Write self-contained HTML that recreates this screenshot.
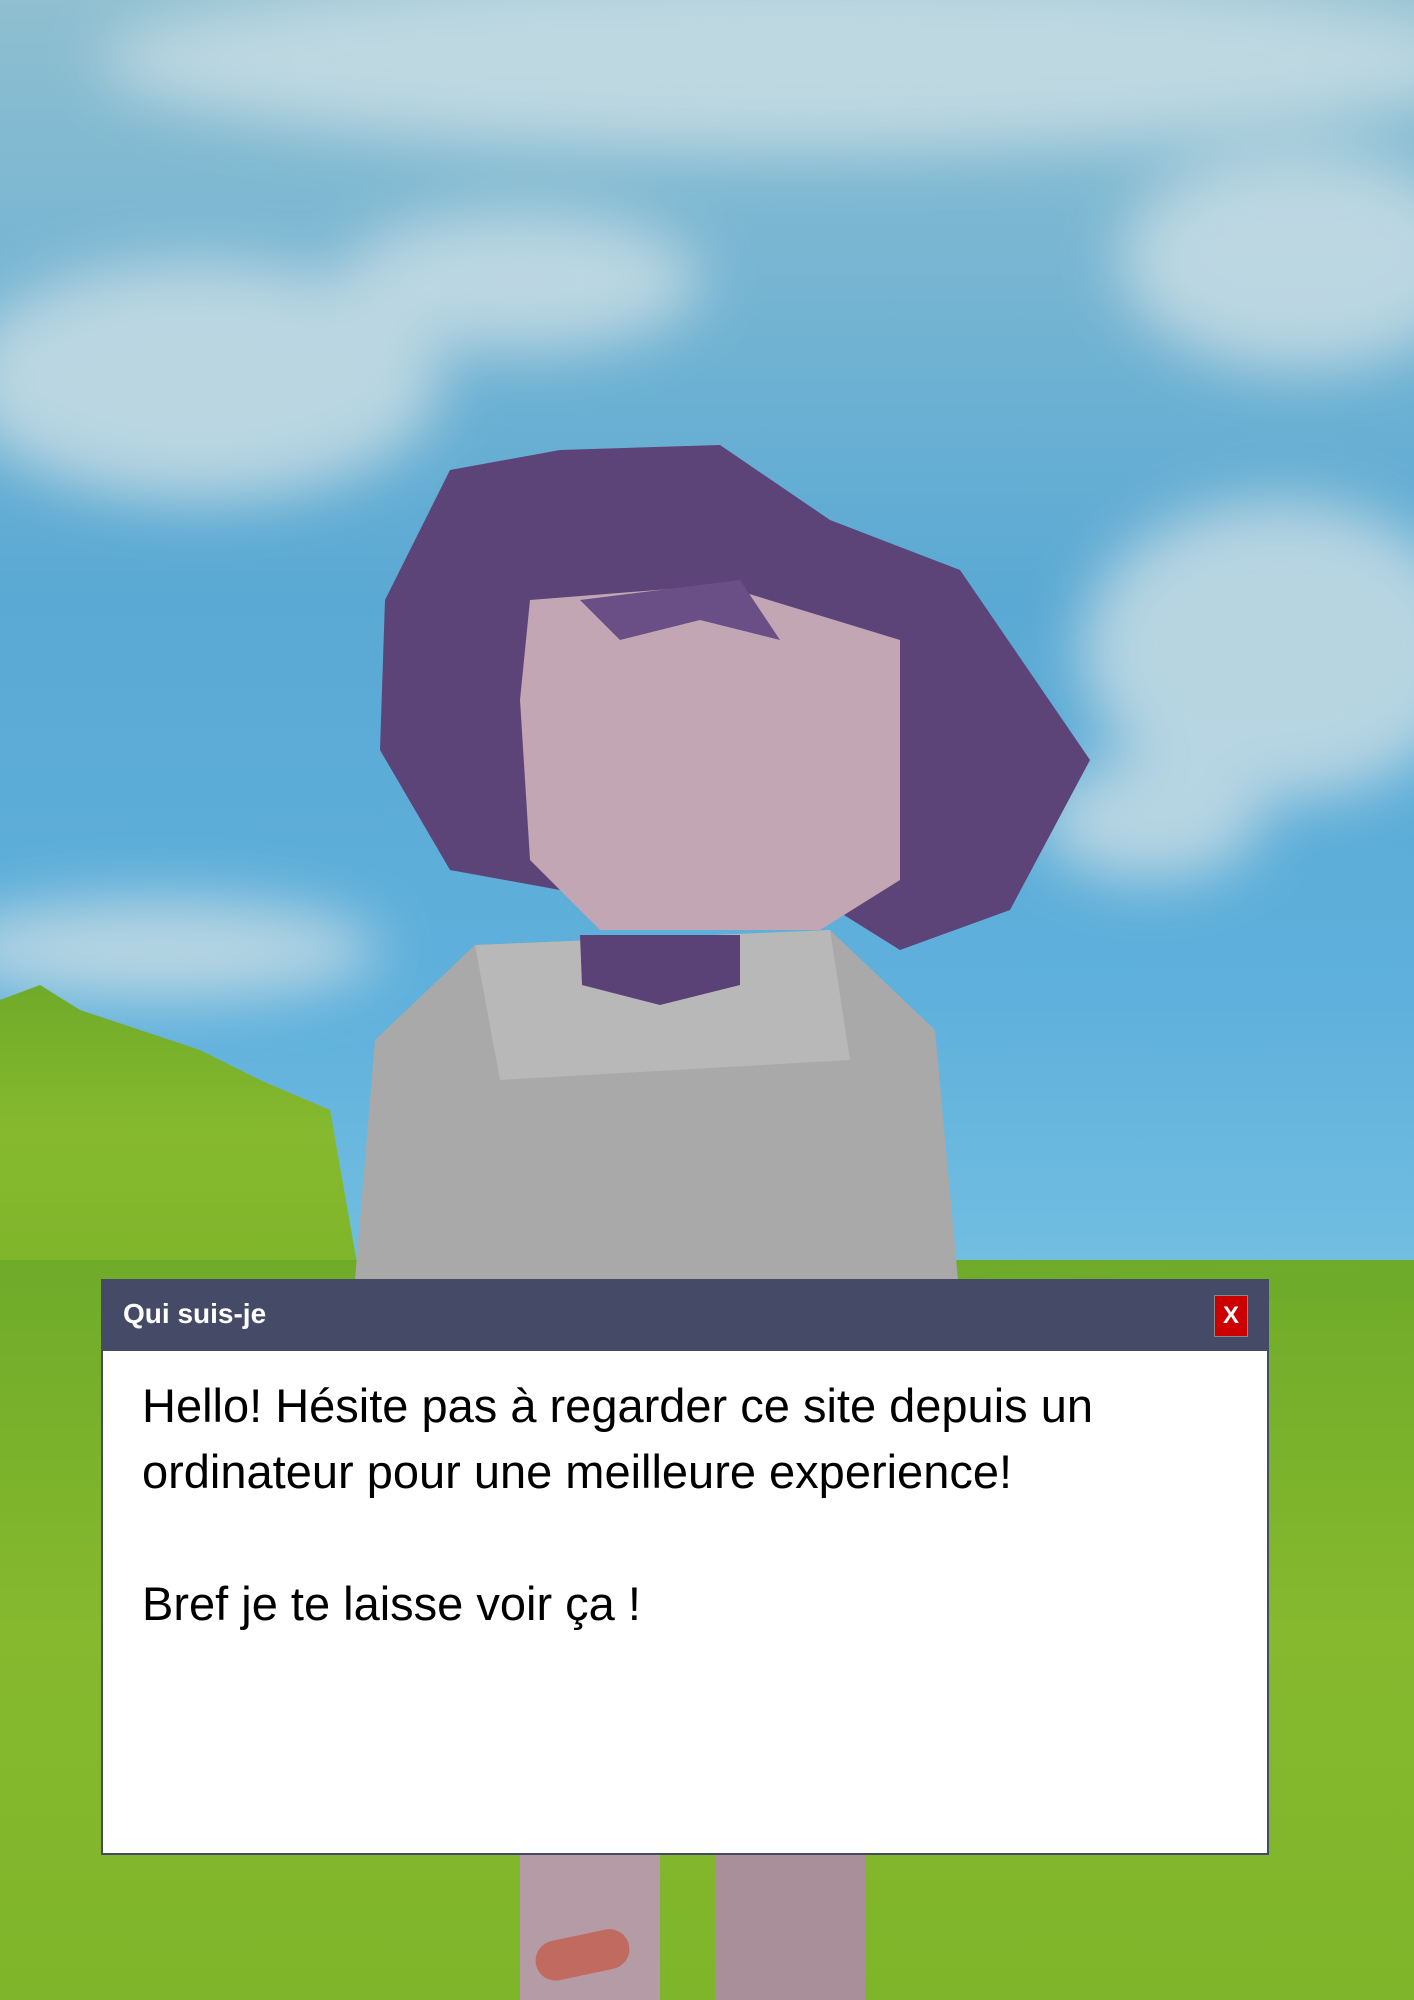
<!DOCTYPE html>
<html><head><meta charset="utf-8"><style>
html,body{margin:0;padding:0}
body{width:1414px;height:2000px;position:relative;overflow:hidden;font-family:"Liberation Sans",sans-serif;
background:linear-gradient(180deg,#8fbfd0 0%,#5aa9d4 30%,#5fb0dc 50%,#74c0e2 65%);}
.abs{position:absolute}
</style></head><body>
<svg class="abs" style="left:0;top:0" width="1414" height="2000" viewBox="0 0 1414 2000">
<defs>
<filter id="b"><feGaussianBlur stdDeviation="30"/></filter>
<linearGradient id="g" x1="0" y1="0" x2="0" y2="1"><stop offset="0" stop-color="#6fab2a"/><stop offset="0.5" stop-color="#86b92e"/><stop offset="1" stop-color="#7fb52a"/></linearGradient>
</defs>
<g filter="url(#b)" fill="#c8dde4" opacity="0.85">
<ellipse cx="800" cy="60" rx="700" ry="90"/>
<ellipse cx="200" cy="380" rx="240" ry="120"/>
<ellipse cx="520" cy="280" rx="180" ry="70"/>
<ellipse cx="1300" cy="260" rx="180" ry="110"/>
<ellipse cx="1280" cy="650" rx="200" ry="150"/>
<ellipse cx="1150" cy="820" rx="110" ry="60"/>
<ellipse cx="160" cy="950" rx="220" ry="50"/>
</g>
<path d="M0 1000 L40 985 L80 1010 L140 1030 L200 1050 L260 1080 L330 1110 L360 1280 L0 1280 Z" fill="url(#g)"/>
<rect x="0" y="1260" width="1414" height="740" fill="url(#g)"/>
<path d="M950 1280 L1000 1270 L1100 1275 L1180 1265 L1280 1268 L1414 1265 L1414 1300 L950 1300Z" fill="#6fab2a"/>
<path d="M475 945 L830 930 L935 1030 L958 1280 L355 1280 L375 1040 Z" fill="#a9a9a9"/>
<path d="M475 945 L830 930 L850 1060 L500 1080 Z" fill="#b8b8b8"/>
<path d="M580 935 L740 935 L740 985 L660 1005 L582 985Z" fill="#5a4276"/>
<path d="M450 470 L560 450 L720 445 L830 520 L960 570 L1090 760 L1010 910 L900 950 L820 900 L560 890 L450 870 L380 750 L385 600 Z" fill="#5c4378"/>
<path d="M530 600 L720 585 L900 640 L900 880 L820 930 L600 930 L530 860 L520 700 Z" fill="#c2a6b4"/>
<path d="M580 600 L740 580 L780 640 L700 620 L620 640 Z" fill="#6a4f86"/>
<rect x="520" y="1855" width="140" height="145" fill="#b49ba6"/>
<rect x="715" y="1855" width="150" height="145" fill="#a88f9a"/>
<rect x="535" y="1935" width="95" height="40" rx="20" fill="#c06a60" transform="rotate(-12 582 1955)"/>
</svg>
<div class="abs" style="left:101px;top:1279px;width:1168px;height:576px;background:#fff;border:2px solid #454a66;box-sizing:border-box">
<div style="height:70px;background:#454a66;position:relative">
<div class="abs" style="left:20px;top:17px;color:#fff;font-weight:bold;font-size:28px">Qui suis-je</div>
<div class="abs" style="left:1111px;top:14px;width:34px;height:42px;background:#cc0000;border:1px solid #888;box-sizing:border-box;color:#fff;font-weight:bold;font-size:24px;text-align:center;line-height:40px">X</div>
</div>
<div style="padding:22px 0 0 39px;font-size:47px;line-height:66px;color:#000">Hello! Hésite pas à regarder ce site depuis un<br>ordinateur pour une meilleure experience!<br><br>Bref je te laisse voir ça !</div>
</div>
</body></html>
